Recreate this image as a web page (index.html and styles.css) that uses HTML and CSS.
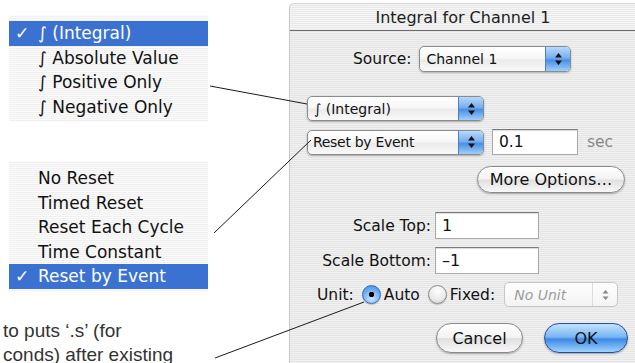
FILE: index.html
```html
<!DOCTYPE html>
<html>
<head>
<meta charset="utf-8">
<title>Integral for Channel 1</title>
<link rel="stylesheet" href="styles.css">
</head>
<body>
<div class="page">
  <div class="notes">
    <ul class="menu menu-mode">
      <li class="sel"><span class="check">✓</span><span>∫ (Integral)</span></li>
      <li><span class="check"></span><span>∫ Absolute Value</span></li>
      <li><span class="check"></span><span>∫ Positive Only</span></li>
      <li><span class="check"></span><span>∫ Negative Only</span></li>
    </ul>
    <ul class="menu menu-reset">
      <li><span class="check"></span><span>No Reset</span></li>
      <li><span class="check"></span><span>Timed Reset</span></li>
      <li><span class="check"></span><span>Reset Each Cycle</span></li>
      <li><span class="check"></span><span>Time Constant</span></li>
      <li class="sel"><span class="check">✓</span><span>Reset by Event</span></li>
    </ul>
    <p class="caption">to puts ‘.s’ (for<br>conds) after existing</p>
  </div>

  <div class="dialog">
    <div class="titlebar">Integral for Channel 1</div>
    <div class="content">
      <div class="row row-source">
        <span class="label">Source:</span>
        <div class="popup popup-source">
          <span class="value">Channel 1</span>
          <span class="arrows"><svg width="9" height="14" viewBox="0 0 9 14"><path d="M4.5 1 L8 5.5 L1 5.5 Z M4.5 13 L8 8.5 L1 8.5 Z" fill="#111"/></svg></span>
        </div>
      </div>

      <div class="row row-mode">
        <div class="popup popup-wide">
          <span class="value">∫ (Integral)</span>
          <span class="arrows"><svg width="9" height="14" viewBox="0 0 9 14"><path d="M4.5 1 L8 5.5 L1 5.5 Z M4.5 13 L8 8.5 L1 8.5 Z" fill="#111"/></svg></span>
        </div>
      </div>

      <div class="row row-reset">
        <div class="popup popup-wide">
          <span class="value tight">Reset by Event</span>
          <span class="arrows"><svg width="9" height="14" viewBox="0 0 9 14"><path d="M4.5 1 L8 5.5 L1 5.5 Z M4.5 13 L8 8.5 L1 8.5 Z" fill="#111"/></svg></span>
        </div>
        <div class="field field-time">0.1</div>
        <span class="unit">sec</span>
      </div>

      <div class="row row-more">
        <button class="btn btn-more">More Options…</button>
      </div>

      <div class="scale">
        <span class="label">Scale Top:</span>
        <div class="field">1</div>
        <span class="label">Scale Bottom:</span>
        <div class="field">–1</div>
      </div>

      <div class="row row-unit">
        <span class="label">Unit:</span>
        <span class="radio on"></span>
        <span class="label opt">Auto</span>
        <span class="radio"></span>
        <span class="label opt">Fixed:</span>
        <div class="popup popup-off">
          <span class="value">No Unit</span>
          <span class="arrows"><svg width="9" height="14" viewBox="0 0 9 14"><path d="M4.5 2 L7.5 5.5 L1.5 5.5 Z M4.5 12 L7.5 8.5 L1.5 8.5 Z" fill="#888"/></svg></span>
        </div>
      </div>

      <div class="row row-buttons">
        <button class="btn btn-cancel">Cancel</button>
        <button class="btn btn-ok">OK</button>
      </div>
    </div>
  </div>

  <svg class="leaders" width="635" height="363" viewBox="0 0 635 363">
    <line x1="210" y1="86" x2="307" y2="104"/>
    <line x1="214" y1="233" x2="311" y2="140"/>
    <line x1="215" y1="358" x2="364" y2="302"/>
  </svg>
</div>
</body>
</html>
```

FILE: styles.css
```css
html, body { margin:0; padding:0; background:#fff; }
body { width:635px; height:363px; overflow:hidden; font-family:"DejaVu Sans", sans-serif; color:#111; }

.page { position:relative; display:flex; height:363px; }

/* left side: the two menus and the note */
.notes { width:289px; flex:none; }

.menu
{
  list-style:none;
  margin:0 0 0 9px; padding:0;
  width:199px;
  font-size:17px;
  background:repeating-linear-gradient(#fbfbfb 0 1px, #f0f0f0 1px 2px);
}
.menu li { display:flex; align-items:center; height:24.5px; padding-left:6px; white-space:nowrap; }
.menu .check { width:23px; flex:none; font-size:17px; font-weight:bold; }
.menu li.sel { background:#3b72d2; color:#fff; }

.menu-mode { margin-top:15px; padding:6px 0 3px; }
.menu-reset { margin-top:39px; padding:5px 0 2px; }

.caption
{
  margin:28px 0 0 3px;
  font-family:"Liberation Sans", sans-serif;
  font-size:19px; line-height:24px;
  color:#333;
  white-space:nowrap;
}

/* right side: the dialog */
.dialog
{
  flex:none;
  width:360px; height:360px;
  margin-top:3px;
  border-left:1px solid #c9c9c9;
  border-top:1px solid #d6d6d6;
  border-radius:5px 0 0 0;
  background:repeating-linear-gradient(#f1f1f1 0 1px, #e5e5e5 1px 2px);
  font-size:15.5px;
}
.titlebar
{
  height:26px;
  padding-right:14px;
  display:flex; align-items:center; justify-content:center;
  font-size:16px; color:#1e1e1e;
  background:repeating-linear-gradient(#f6f6f6 0 1px, #e8e8e8 1px 2px);
  border-bottom:1px solid #6c6c6c;
  border-radius:5px 0 0 0;
}

.content { display:flex; flex-direction:column; }
.row { display:flex; align-items:center; }

.row-source { margin-top:15px; padding-left:63px; gap:8px; }
.row-mode { margin-top:24px; padding-left:17px; }
.row-reset { margin-top:8px; padding-left:17px; }
.row-more { margin-top:11px; padding-left:187px; }
.row-unit { margin-top:8px; padding-left:27px; }
.row-buttons { margin-top:16px; padding-left:146px; gap:21px; }

/* aqua popup buttons */
.popup
{
  display:flex;
  height:25px;
  box-sizing:border-box;
  border:1px solid #8b8b8b;
  border-radius:5px;
  background:linear-gradient(#ffffff, #f7f7f7 45%, #ebebeb 55%, #f9f9f9);
  box-shadow:0 1px 2px rgba(0,0,0,.28);
  overflow:hidden;
  font-size:14px;
}
.popup .value { flex:1; display:flex; align-items:center; padding-left:6px; white-space:nowrap; }
.popup .value.tight { padding-left:5px; letter-spacing:-0.3px; }
.popup .arrows
{
  width:24px; flex:none;
  display:flex; align-items:center; justify-content:center;
  border-left:1px solid #4f7ec4;
  background:linear-gradient(#b8d9fb, #76b0f0 45%, #4a8ee6 55%, #9fd0fb);
}
.popup-source { width:152px; height:26px; }
.popup-wide { width:177px; }
.popup-off
{
  width:114px; margin-left:9px;
  border-color:#c6c6c6;
  background:linear-gradient(#fdfdfd, #f4f4f4);
  box-shadow:none;
  color:#9c9c9c; font-style:italic;
}
.popup-off .value { padding-left:9px; }
.popup-off .arrows { border-left:1px solid #dcdcdc; background:none; }

/* text fields */
.field
{
  box-sizing:border-box;
  width:104px; height:27px;
  padding-left:6px;
  display:flex; align-items:center;
  background:#fff;
  border:1px solid #a9a9a9;
  border-top-color:#7c7c7c;
  box-shadow:inset 0 1px 1px rgba(0,0,0,.15);
  font-size:16px;
}
.field-time { width:86px; height:26px; margin-left:8px; font-size:15.5px; }
.unit { margin-left:9px; color:#8a8a8a; font-size:15.5px; }

.scale
{
  display:grid;
  grid-template-columns:130px 104px;
  column-gap:4px; row-gap:8px;
  align-items:center;
  margin-top:19px; padding-left:11px;
}
.scale .label { text-align:right; white-space:nowrap; }

/* radios */
.radio
{
  box-sizing:border-box;
  width:19px; height:19px; flex:none;
  border-radius:50%;
  border:1px solid #8a8a8a;
  background:radial-gradient(circle at 50% 30%, #ffffff, #e9e9e9 60%, #cfcfcf);
  box-shadow:0 1px 1px rgba(0,0,0,.2);
}
.radio.on
{
  border-color:#3a6cbf;
  background:radial-gradient(circle, #000 0 2.5px, transparent 3px),
             radial-gradient(circle at 50% 75%, #cde9ff, #7ab6f3 50%, #3c80dc);
}
.row-unit .radio { margin-left:8px; }
.row-unit .opt { margin-left:3px; }

/* push buttons */
.btn
{
  height:30px; box-sizing:border-box;
  border:1px solid #8a8a8a;
  border-radius:15px;
  font-family:"DejaVu Sans", sans-serif;
  font-size:16px; color:#111;
  padding:0;
  background:linear-gradient(#ffffff, #f3f3f3 48%, #e0e0e0 52%, #f8f8f8);
  box-shadow:0 1px 2px rgba(0,0,0,.3);
}
.btn-more { width:148px; height:27px; }
.btn-cancel { width:87px; }
.btn-ok
{
  width:84px;
  border-color:#24509a;
  background:linear-gradient(#c3e2ff, #7ab7f3 45%, #3f8ae6 55%, #9fd4ff);
}

/* annotation lines */
.leaders { position:absolute; left:0; top:0; pointer-events:none; }
.leaders line { stroke:#1a1a1a; stroke-width:1; }
```
